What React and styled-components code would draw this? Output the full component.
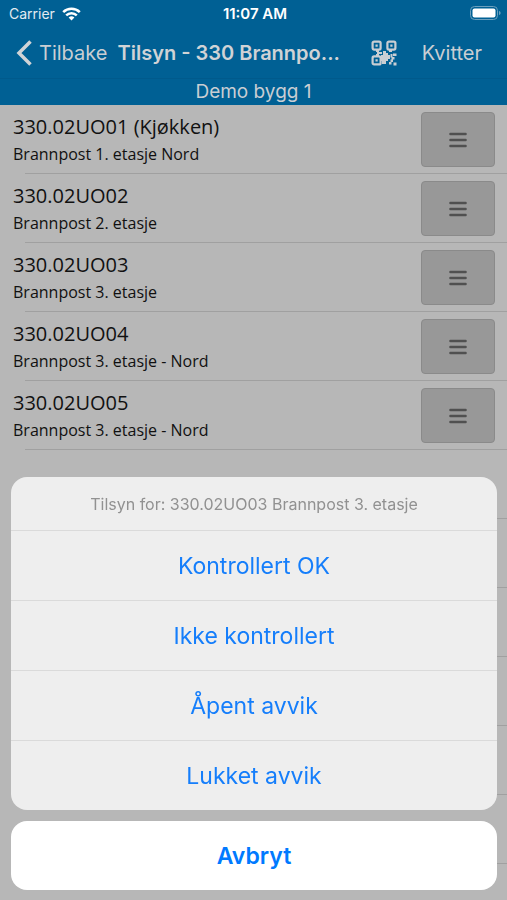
import React from "react"
import styled, { createGlobalStyle } from "styled-components"

const posts = [
  { id: "330.02UO01 (Kjøkken)", place: "Brannpost 1. etasje Nord" },
  { id: "330.02UO02", place: "Brannpost 2. etasje" },
  { id: "330.02UO03", place: "Brannpost 3. etasje" },
  { id: "330.02UO04", place: "Brannpost 3. etasje - Nord" },
  { id: "330.02UO05", place: "Brannpost 3. etasje - Nord" },
]

const emptyRows = [1, 2, 3, 4, 5, 6]

const actions = ["Kontrollert OK", "Ikke kontrollert", "Åpent avvik", "Lukket avvik"]

function WifiIcon() {
  return (
    <svg width="19" height="14" viewBox="0 0 19 14" fill="none" stroke="#fff" strokeWidth="2.5" aria-hidden="true">
      <path d="M1.2 5.2a11.8 11.8 0 0 1 16.6 0" />
      <path d="M4.2 8.3a7.6 7.6 0 0 1 10.6 0" />
      <path d="M9.5 13.6 6.6 10.6a4.2 4.2 0 0 1 5.8 0z" fill="#fff" stroke="none" />
    </svg>
  )
}

function BatteryIcon() {
  return (
    <svg width="31" height="15" viewBox="0 0 31 15" aria-hidden="true">
      <rect x="0.5" y="0.5" width="27" height="13" rx="4" fill="none" stroke="#6b9fbd" />
      <rect x="2.5" y="2.5" width="23" height="9" rx="2" fill="#fff" />
      <path d="M29 5v4c1-.3 1.6-1.1 1.6-2S30 5.3 29 5z" fill="#6b9fbd" />
    </svg>
  )
}

function BackIcon() {
  return (
    <svg width="16" height="26" viewBox="0 0 16 26" fill="none" stroke="#d0d3d6" strokeWidth="3.5" aria-hidden="true">
      <path d="M14.5 1.5 3 13l11.5 11.5" />
    </svg>
  )
}

function QrIcon() {
  return (
    <svg width="26" height="26" viewBox="0 0 26 26" fill="#c9ced3" aria-hidden="true">
      <g fill="none" stroke="#c9ced3" strokeWidth="2.2">
        <rect x="1.6" y="1.6" width="8" height="8" rx="1.5" />
        <rect x="16.4" y="1.6" width="8" height="8" rx="1.5" />
        <rect x="1.6" y="16.4" width="8" height="8" rx="1.5" />
      </g>
      <path d="M4.5 4.500h2.200v2.200H4.500zM19.300 4.500h2.200v2.200h-2.200zM4.500 19.300h2.200v2.200H4.500z" />
      <path d="M5 10h3v2h3v2H8v2H5v-2h1v-2H5zM18 10h3v2h-3zM12 11h3v2h2v2h2v4h-2v2h-2v3h-4v-3h-1v-6h2z" />
      <path d="M22 13.500h3.500v2.500H22zM19.500 14h2v3h2v2.500h-3v-2h-1zM18 22h2.500v2.500H18zM22.500 22.500h3v3h-3zM19.500 19.500H22V22h-2.500z" />
    </svg>
  )
}

function MenuIcon() {
  return (
    <svg width="18" height="16" viewBox="0 0 18 16" stroke="#505050" strokeWidth="2.6" strokeLinecap="round" aria-hidden="true">
      <path d="M1.5 2h15M1.5 8h15M1.5 14h15" />
    </svg>
  )
}

function App() {
  return (
    <Page>
      <GlobalStyle />
      <Header>
        <StatusBar>
          <Carrier>
            Carrier <WifiIcon />
          </Carrier>
          <Clock>11:07 AM</Clock>
          <Battery>
            <BatteryIcon />
          </Battery>
        </StatusBar>
        <Toolbar>
          <BackButton>
            <BackIcon /> Tilbake
          </BackButton>
          <Title>Tilsyn - 330 Brannpo...</Title>
          <BarButton aria-label="Skann QR-kode">
            <QrIcon />
          </BarButton>
          <BarButton>Kvitter</BarButton>
        </Toolbar>
        <Building>Demo bygg 1</Building>
      </Header>

      <List>
        {posts.map((post) => (
          <Row key={post.id}>
            <RowText>
              <PostId>{post.id}</PostId>
              <Place>{post.place}</Place>
            </RowText>
            <MenuButton aria-label={"Meny for " + post.id}>
              <MenuIcon />
            </MenuButton>
          </Row>
        ))}
        {emptyRows.map((n) => (
          <Row key={n} aria-hidden="true" />
        ))}
      </List>

      <Sheet role="dialog" aria-labelledby="sheet-title">
        <Group>
          <SheetTitle id="sheet-title">Tilsyn for: 330.02UO03 Brannpost 3. etasje</SheetTitle>
          {actions.map((action) => (
            <Action key={action}>{action}</Action>
          ))}
        </Group>
        <Cancel>Avbryt</Cancel>
      </Sheet>
    </Page>
  )
}

export default App

const GlobalStyle = createGlobalStyle`
  * {
    box-sizing: border-box;
  }
  body {
    margin: 0;
    background: #b7b7b7;
    font-family: Inter, "Liberation Sans", sans-serif;
  }
  button {
    margin: 0;
    padding: 0;
    border: 0;
    background: none;
    font-family: inherit;
    cursor: pointer;
  }
`

const Page = styled.div`
  height: 100vh;
  overflow: hidden;
`

const Header = styled.header`
  background: #006094;
  color: #c9ced3;
`

const StatusBar = styled.div`
  display: grid;
  grid-template-columns: 1fr auto 1fr;
  align-items: center;
  height: 27px;
  padding: 0 6px 0 9px;
  color: #fff;
  font-size: 14px;
`

const Carrier = styled.span`
  display: flex;
  align-items: center;
  gap: 7px;
  color: #e3ebf1;
`

const Clock = styled.span`
  font-size: 15px;
  font-weight: 600;
`

const Battery = styled.span`
  display: flex;
  justify-content: flex-end;
`

const Toolbar = styled.div`
  display: flex;
  align-items: center;
  height: 52px;
  padding: 0 25px 0 16px;
  border-bottom: 1px solid #005a8c;
`

const BarButton = styled.button`
  display: flex;
  align-items: center;
  margin-left: 25px;
  color: inherit;
  font-size: 20px;
`

const BackButton = styled(BarButton)`
  gap: 7px;
  margin-left: 0;
`

const Title = styled.h1`
  flex: 1;
  margin: 0 0 0 10px;
  overflow: hidden;
  color: #d0d3d6;
  font-size: 20px;
  font-weight: 600;
  white-space: nowrap;
`

const Building = styled.div`
  font-size: 19px;
  line-height: 26px;
  text-align: center;
`

const List = styled.ul`
  margin: 0;
  padding: 0;
  list-style: none;
  color: #111;
  font-family: "Open Sans", "Noto Sans", sans-serif;
`

const Row = styled.li`
  display: flex;
  align-items: center;
  justify-content: space-between;
  height: 69px;
  padding: 0 12px 0 13px;
  background: linear-gradient(#a0a0a0, #a0a0a0) 25px 100% / 100% 1px no-repeat;
`

const RowText = styled.div`
  display: flex;
  flex-direction: column;
`

const PostId = styled.span`
  font-size: 20px;
  line-height: 28px;
`

const Place = styled.span`
  font-size: 16px;
  line-height: 26px;
`

const MenuButton = styled.button`
  display: flex;
  align-items: center;
  justify-content: center;
  width: 74px;
  height: 55px;
  border: 1px solid #8a8a8a;
  border-radius: 4px;
  background: #989898;
`

const Sheet = styled.div`
  position: fixed;
  right: 10px;
  bottom: 10px;
  left: 11px;
  display: flex;
  flex-direction: column;
  gap: 11px;
`

const Group = styled.div`
  display: flex;
  flex-direction: column;
  overflow: hidden;
  border-radius: 16px;
  background: #eee;
`

const SheetTitle = styled.h2`
  margin: 0;
  padding-top: 1px;
  color: #919191;
  font-size: 16px;
  font-weight: 400;
  line-height: 52px;
  text-align: center;
`

const Action = styled.button`
  height: 70px;
  padding-top: 1px;
  border-top: 1px solid #dadada;
  color: #157efb;
  font-size: 23px;
`

const Cancel = styled.button`
  height: 69px;
  border-radius: 16px;
  background: #fff;
  color: #007aff;
  font-size: 23px;
  font-weight: 600;
`
